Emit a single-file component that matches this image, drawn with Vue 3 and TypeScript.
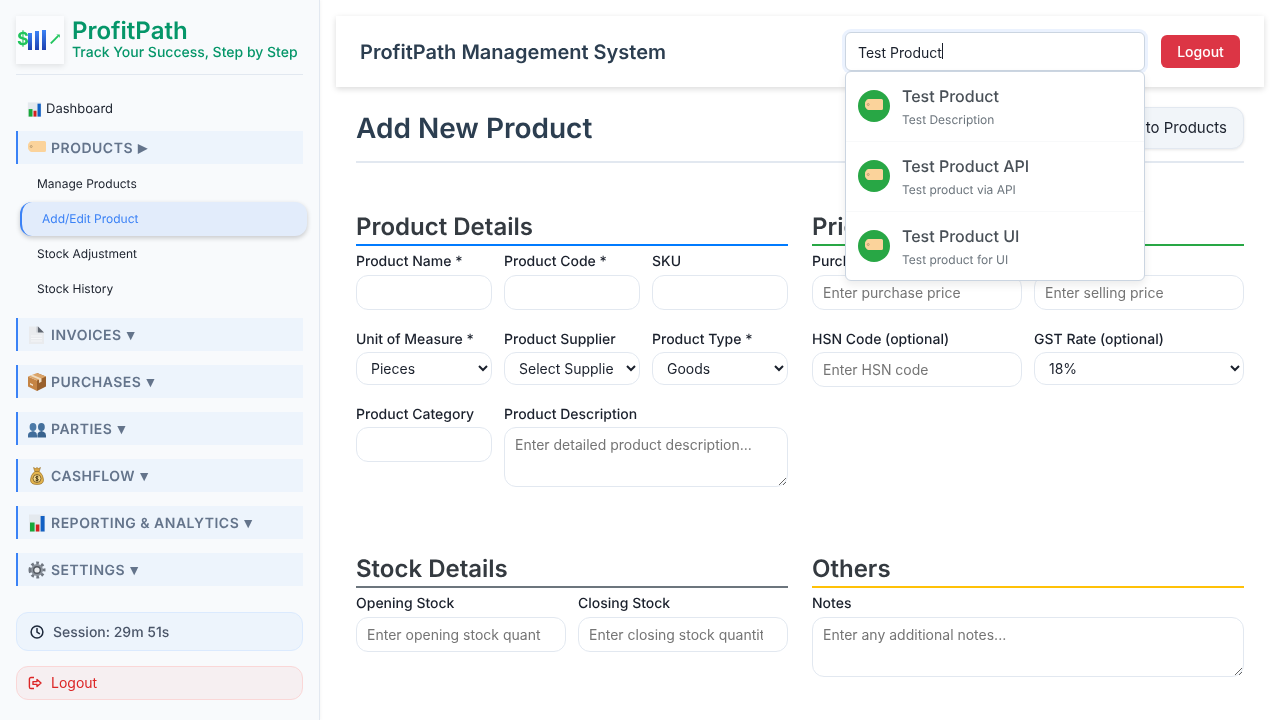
<script setup lang="ts">
import { onMounted, ref } from 'vue'

interface Shape {
  d: string
  fill?: string
  stroke?: string
  sw?: number
  dash?: string
}

const searchEl = ref<HTMLInputElement | null>(null)
const search = 'Test Product'

// small pictograms, all on an 18x18 box
const icons: Record<string, Shape[]> = {
  chart: [
    { d: 'M1 0.5 H17 V18 H1 Z', fill: '#e4e9ee' },
    { d: 'M2 8.5 H6.6 V17.5 H2 Z', fill: '#18a83a' },
    { d: 'M7.8 10.5 H11.4 V17.5 H7.8 Z', fill: '#d3201f' },
    { d: 'M12.6 2 H16.6 V17.5 H12.6 Z', fill: '#1260c4' }
  ],
  tag: [
    {
      d: 'M3.5 2 H16.5 Q18 2 18 3.5 V11.5 Q18 13 16.5 13 H3.5 Q2.6 13 1.8 12.2 L0.5 10.5 Q0 9.8 0 9 V6 Q0 5.2 0.5 4.5 L1.8 2.8 Q2.6 2 3.5 2 Z',
      fill: '#fbd39b'
    },
    { d: 'M2.2 7.5 a1 1 0 1 0 2 0 a1 1 0 1 0 -2 0 Z', fill: '#fbd39b', stroke: '#a88c66', sw: 0.7 }
  ],
  page: [
    { d: 'M1 0.5 H10 L16 6.5 V18 H1 Z', fill: '#e9ebee' },
    { d: 'M10 0.5 L16 6.5 H10 Z', fill: '#5f6670' },
    { d: 'M10 0.5 V6.5 H8.5 V0.5 Z', fill: '#c4c8ce' },
    { d: 'M3 10 H14 M3 12.5 H14 M3 15 H14', stroke: '#f5f6f8', sw: 1 }
  ],
  box: [
    { d: 'M9 0 L18 3.5 V13.5 L9 18 Z', fill: '#99602c' },
    { d: 'M0 3.5 L9 7.5 V18 L0 13.5 Z', fill: '#c58444' },
    { d: 'M0 3.5 L9 0 L18 3.5 L9 7.5 Z', fill: '#dba468' },
    { d: 'M4.5 1.8 L13.5 5.6 V8.8 L11 10 V6.6 L2 2.8 Z', fill: '#f0dcc0' },
    { d: 'M2 10 L5 11.5 V13 L2 11.5 Z', fill: '#f3e6d4' }
  ],
  people: [
    { d: 'M1.6 7 a3.4 4 0 1 0 6.8 0 a3.4 4 0 1 0 -6.8 0 Z', fill: '#4d7ba8' },
    { d: 'M10 7 a3.4 4 0 1 0 6.8 0 a3.4 4 0 1 0 -6.8 0 Z', fill: '#44709c' },
    { d: 'M0 17.5 V15.5 Q0 12.5 3 11.8 L5 11 L7 11.8 Q9 12.5 9 15.5 V17.5 Z', fill: '#406d9b' },
    { d: 'M9.4 17.5 V15.5 Q9.4 12.5 11.4 11.8 L13.4 11 L15.4 11.8 Q18 12.5 18 15.5 V17.5 Z', fill: '#38628d' }
  ],
  money: [
    { d: 'M5.5 0.5 L7.5 1.5 L9 0.5 L10.5 1.5 L12.5 0.5 L11.2 4.5 H6.8 Z', fill: '#d9a441', stroke: '#8a6420', sw: 0.5 },
    {
      d: 'M6.8 4.5 H11.2 Q15.5 8 15.5 13 Q15.5 17.5 9 17.5 Q2.5 17.5 2.5 13 Q2.5 8 6.8 4.5 Z',
      fill: '#e3b44e',
      stroke: '#8a6420',
      sw: 0.6
    },
    { d: 'M5 11.5 a4 4 0 1 0 8 0 a4 4 0 1 0 -8 0 Z', fill: '#f4d98c', stroke: '#5b4216', sw: 0.7 },
    { d: 'M10.4 10 Q9 9 7.9 10 Q7.4 11.2 9 11.6 Q10.7 12 10.2 13.2 Q9 14.1 7.6 13.1 M9 8.6 V14.6', stroke: '#3e2c0c', sw: 0.9, fill: 'none' }
  ],
  gear: [
    { d: 'M2.2 9 a6.8 6.8 0 1 0 13.6 0 a6.8 6.8 0 1 0 -13.6 0 Z', fill: 'none', stroke: '#6f7680', sw: 3.4, dash: '2.6 2.4' },
    { d: 'M3 9 a6 6 0 1 0 12 0 a6 6 0 1 0 -12 0 Z', fill: '#8b929b' },
    { d: 'M5 9 a4 4 0 1 0 8 0 a4 4 0 1 0 -8 0 Z', fill: '#50565e' },
    { d: 'M6.4 9 a2.6 2.6 0 1 0 5.2 0 a2.6 2.6 0 1 0 -5.2 0 Z', fill: '#e9ecef' }
  ]
}

const subItems = [
  { label: 'Manage Products', active: false },
  { label: 'Add/Edit Product', active: true },
  { label: 'Stock Adjustment', active: false },
  { label: 'Stock History', active: false }
]

const groups = [
  { icon: 'page', label: 'INVOICES' },
  { icon: 'box', label: 'PURCHASES' },
  { icon: 'people', label: 'PARTIES' },
  { icon: 'money', label: 'CASHFLOW' },
  { icon: 'chart', label: 'REPORTING & ANALYTICS' },
  { icon: 'gear', label: 'SETTINGS' }
]

const results = [
  { name: 'Test Product', desc: 'Test Description' },
  { name: 'Test Product API', desc: 'Test product via API' },
  { name: 'Test Product UI', desc: 'Test product for UI' }
]

onMounted(() => {
  const el = searchEl.value
  if (el) {
    el.focus()
    el.setSelectionRange(search.length, search.length)
  }
})
</script>

<template>
  <div class="app">
    <!-- Sidebar -->
    <aside class="sidebar">
      <div class="brand">
        <div class="logo">
          <span class="logo-dollar">$</span>
          <span class="logo-bars"><i></i><i></i><i></i></span>
          <svg class="logo-arrow" width="10" height="10" viewBox="0 0 10 10">
            <path d="M0.8 9.4 L8 2.2" stroke="#22c55e" stroke-width="1.9" fill="none" />
            <path d="M6.4 0.4 H9.8 V3.8 Z" fill="#22c55e" />
          </svg>
        </div>
        <div class="brand-text">
          <div class="brand-name">ProfitPath</div>
          <div class="brand-tag">Track Your Success, Step by Step</div>
        </div>
      </div>

      <nav class="nav">
        <a class="nav-link">
          <svg class="dash-icon" width="15" height="15" viewBox="0 0 18 18">
            <path v-for="s in icons.chart" :key="s.d" :d="s.d" :fill="s.fill" />
          </svg>
          Dashboard
        </a>
        <div class="group">
          <svg class="group-icon" width="18" height="18" viewBox="0 0 18 18">
            <path
              v-for="s in icons.tag"
              :key="s.d"
              :d="s.d"
              :fill="s.fill"
              :stroke="s.stroke"
              :stroke-width="s.sw"
            />
          </svg>
          <span>PRODUCTS</span>
          <span class="caret caret-right">▶</span>
        </div>
        <div class="sub-list">
          <a
            v-for="item in subItems"
            :key="item.label"
            class="sub-link"
            :class="{ active: item.active }"
          >{{ item.label }}</a>
        </div>
        <div v-for="g in groups" :key="g.label" class="group group-closed">
          <svg class="group-icon" width="18" height="18" viewBox="0 0 18 18">
            <path
              v-for="s in icons[g.icon]"
              :key="s.d"
              :d="s.d"
              :fill="s.fill"
              :stroke="s.stroke"
              :stroke-width="s.sw"
              :stroke-dasharray="s.dash"
            />
          </svg>
          <span>{{ g.label }}</span>
          <span class="caret">▼</span>
        </div>
      </nav>

      <div class="session">
        <svg width="14" height="14" viewBox="0 0 14 14" fill="none" stroke="#1e293b" stroke-width="1.5">
          <circle cx="7" cy="7" r="5.9" />
          <path d="M7 3.4 V7 L9.4 8.6" stroke-linecap="round" />
        </svg>
        <span>Session: 29m 51s</span>
      </div>
      <button class="side-logout">
        <svg width="14" height="14" viewBox="0 0 14 14" fill="none" stroke="#dc2626" stroke-width="1.4">
          <path d="M6 1.5 H3 a1.6 1.6 0 0 0 -1.6 1.6 V10.9 a1.6 1.6 0 0 0 1.6 1.6 H6" />
          <path d="M5 5.6 H9 V3.4 L13 7 L9 10.6 V8.4 H5 Z" stroke-linejoin="round" />
        </svg>
        <span>Logout</span>
      </button>
    </aside>

    <!-- Main -->
    <main class="main">
      <header class="topbar">
        <div class="top-title">ProfitPath Management System</div>
        <div class="search-wrap">
          <input ref="searchEl" class="search" type="text" :value="search" />
          <span class="text-caret"></span>
          <div class="dropdown">
            <div v-for="r in results" :key="r.name" class="result">
              <div class="result-icon">
                <svg width="18" height="18" viewBox="0 0 18 18">
                  <path
                    v-for="s in icons.tag"
                    :key="s.d"
                    :d="s.d"
                    :fill="s.fill"
                    :stroke="s.stroke"
                    :stroke-width="s.sw"
                  />
                </svg>
              </div>
              <div class="result-text">
                <div class="result-name">{{ r.name }}</div>
                <div class="result-desc">{{ r.desc }}</div>
              </div>
            </div>
          </div>
        </div>
        <button class="top-logout">Logout</button>
      </header>

      <section class="page">
        <div class="page-head">
          <h1>Add New Product</h1>
          <button class="back-btn">Back to Products</button>
        </div>

        <div class="sections">
          <div class="block">
            <h2 class="blue">Product Details</h2>
            <div class="grid3">
              <div class="field">
                <label>Product Name *</label>
                <input type="text" />
              </div>
              <div class="field">
                <label>Product Code *</label>
                <input type="text" />
              </div>
              <div class="field">
                <label>SKU</label>
                <input type="text" />
              </div>
              <div class="field">
                <label>Unit of Measure *</label>
                <select><option>Pieces</option></select>
              </div>
              <div class="field">
                <label>Product Supplier</label>
                <select><option>Select Supplier</option></select>
              </div>
              <div class="field">
                <label>Product Type *</label>
                <select><option>Goods</option></select>
              </div>
              <div class="field">
                <label>Product Category</label>
                <input type="text" />
              </div>
              <div class="field span2">
                <label>Product Description</label>
                <textarea placeholder="Enter detailed product description..."></textarea>
              </div>
            </div>
          </div>

          <div class="block">
            <h2 class="green">Pricing Details</h2>
            <div class="grid2">
              <div class="field">
                <label>Purchase Price *</label>
                <input type="text" placeholder="Enter purchase price" />
              </div>
              <div class="field">
                <label>Selling Price *</label>
                <input type="text" placeholder="Enter selling price" />
              </div>
              <div class="field">
                <label>HSN Code (optional)</label>
                <input type="text" placeholder="Enter HSN code" />
              </div>
              <div class="field">
                <label>GST Rate (optional)</label>
                <select><option>18%</option></select>
              </div>
            </div>
          </div>

          <div class="block">
            <h2 class="grey">Stock Details</h2>
            <div class="grid2">
              <div class="field">
                <label>Opening Stock</label>
                <input type="text" placeholder="Enter opening stock quantity" />
              </div>
              <div class="field">
                <label>Closing Stock</label>
                <input type="text" placeholder="Enter closing stock quantity" />
              </div>
            </div>
          </div>

          <div class="block">
            <h2 class="yellow">Others</h2>
            <div class="field">
              <label>Notes</label>
              <textarea placeholder="Enter any additional notes..."></textarea>
            </div>
          </div>
        </div>
      </section>
    </main>
  </div>
</template>

<style>
html,
body {
  margin: 0;
  overflow: hidden;
  background: #fff;
}
</style>

<style scoped>
.app {
  display: flex;
  height: 720px;
  overflow: hidden;
  font-family: Inter, "Noto Sans", sans-serif;
  color: #1a202c;
  text-rendering: geometricPrecision;
  will-change: transform;
}

/* Sidebar */
.sidebar {
  width: 320px;
  flex: none;
  box-sizing: border-box;
  padding: 16px 16px 20px;
  background: #f8fafc;
  border-right: 1px solid #e2e8f0;
  box-shadow: 1px 0 3px rgba(0, 0, 0, 0.04);
  display: flex;
  flex-direction: column;
}

.brand {
  display: flex;
  gap: 8px;
  height: 59px;
  border-bottom: 1px solid #e2e8f0;
  box-sizing: border-box;
}

.logo {
  width: 48px;
  height: 48px;
  box-sizing: border-box;
  padding-left: 1px;
  background: #fbfcfe;
  box-shadow: 0 2px 6px rgba(0, 0, 0, 0.1);
  display: flex;
  align-items: center;
}

.logo-dollar {
  width: 11px;
  font-size: 18px;
  font-weight: 700;
  color: #22c55e;
  line-height: 1;
}

.logo-bars {
  display: flex;
  align-items: flex-end;
  gap: 3px;
  height: 20px;
}

.logo-bars i {
  display: block;
  width: 4px;
  height: 100%;
  background: linear-gradient(#3b82f6, #1e40af);
}

.logo-bars i:nth-child(1) {
  height: 17px;
}

.logo-bars i:nth-child(2) {
  height: 19px;
}

.logo-arrow {
  margin: -3px 0 0 4px;
}

.brand-name {
  font-size: 24px;
  font-weight: 600;
  line-height: 29px;
  color: #059669;
}

.brand-tag {
  font-size: 14px;
  font-weight: 500;
  line-height: 17px;
  margin-top: -1px;
  color: #059669;
}

.nav {
  display: flex;
  flex-direction: column;
  flex: 1;
  margin-top: 24px;
}

.nav-link {
  display: flex;
  align-items: center;
  gap: 4px;
  font-size: 13px;
  line-height: 20px;
  padding-left: 11px;
  margin-bottom: 12px;
}

.group {
  height: 33px;
  box-sizing: border-box;
  display: flex;
  align-items: center;
  border-left: 2px solid #3b82f6;
  background: #edf4fc;
  padding: 1px 0 0 10px;
  font-size: 14px;
  font-weight: 600;
  letter-spacing: 0.5px;
  color: #64748b;
  white-space: nowrap;
}

.group-closed {
  margin-bottom: 14px;
}

.group-icon {
  flex: none;
  margin-right: 5px;
}

.caret {
  margin-left: 2px;
  font-family: "Liberation Sans", sans-serif;
  font-size: 14px;
  letter-spacing: 0;
}

.caret-right {
  margin-left: 5px;
  font-size: 12px;
}

.sub-list {
  display: flex;
  flex-direction: column;
  margin: 2px 0 12px;
}

.sub-link {
  height: 35px;
  line-height: 35px;
  font-size: 12px;
  padding-left: 21px;
  color: #1a202c;
}

.sub-link.active {
  height: 34px;
  line-height: 34px;
  margin: 1px -4px 0 4px;
  padding-left: 20px;
  color: #3b82f6;
  background: #e2ecfb;
  border-left: 2px solid #3b82f6;
  border-radius: 12px;
  box-shadow: 0 2px 5px rgba(0, 0, 0, 0.2);
}

.session {
  height: 39px;
  box-sizing: border-box;
  display: flex;
  align-items: center;
  gap: 9px;
  padding: 1px 0 0 13px;
  border: 1px solid #dbeafe;
  border-radius: 12px;
  background: #edf4fc;
  font-size: 14px;
  font-weight: 500;
  color: #4a5568;
}

.side-logout {
  height: 34px;
  margin-top: 15px;
  display: flex;
  align-items: center;
  gap: 9px;
  padding: 0 0 1px 11px;
  border: 1px solid #fad7d7;
  border-radius: 12px;
  background: #f6eff1;
  font-family: inherit;
  font-size: 14px;
  color: #dc2626;
}

/* Main */
.main {
  flex: 1;
  min-width: 0;
  padding: 16px 16px 0;
  position: relative;
}

.topbar {
  height: 71px;
  display: flex;
  align-items: center;
  padding: 0 24px;
  background: #fff;
  box-shadow: 0 2px 6px rgba(0, 0, 0, 0.15);
}

.top-title {
  flex: 1;
  font-size: 20px;
  font-weight: 600;
  color: #2c3e50;
}

.search-wrap {
  position: relative;
  width: 300px;
  margin-right: 16px;
}

.search {
  display: block;
  width: 100%;
  height: 39px;
  box-sizing: border-box;
  padding: 1px 12px 0;
  border: 1px solid #cbd5e1;
  border-radius: 6px;
  outline: none;
  box-shadow: 0 0 0 3px rgba(59, 130, 246, 0.1);
  font-family: inherit;
  font-size: 14px;
  color: #1a202c;
  caret-color: transparent;
}

.text-caret {
  position: absolute;
  left: 97px;
  top: 11px;
  width: 1px;
  height: 16px;
  background: #1a202c;
}

.dropdown {
  position: absolute;
  top: 39px;
  left: 0;
  right: 0;
  z-index: 10;
  background: #fff;
  border: 1px solid #cbd5e1;
  border-radius: 6px;
  box-shadow: 0 4px 8px rgba(0, 0, 0, 0.08);
}

.result {
  height: 70px;
  box-sizing: border-box;
  display: flex;
  align-items: flex-start;
  gap: 12px;
  padding: 0 12px;
  border-bottom: 1px solid #f8f9fa;
}

.result:last-child {
  height: 68px;
  border-bottom: none;
}

.result-icon {
  width: 32px;
  height: 32px;
  margin-top: 18px;
  border-radius: 50%;
  background: #28a745;
  display: flex;
  align-items: center;
  justify-content: center;
}

.result-icon svg {
  margin-top: -1px;
}

.result-text {
  margin-top: 15px;
}

.result-name {
  font-size: 16px;
  font-weight: 500;
  line-height: 19px;
  color: #495057;
  margin-bottom: 6px;
}

.result-desc {
  font-size: 12px;
  line-height: 15px;
  color: #6c757d;
}

.top-logout {
  width: 79px;
  height: 33px;
  border: none;
  border-radius: 6px;
  background: #dc3545;
  color: #fff;
  font-family: inherit;
  font-size: 14px;
  font-weight: 500;
}

.page {
  padding: 20px 20px 0;
}

.page-head {
  height: 42px;
  display: flex;
  align-items: center;
  justify-content: space-between;
  border-bottom: 2px solid #e2e8f0;
  padding-bottom: 12px;
}

h1 {
  margin: 0;
  font-size: 28px;
  font-weight: 600;
  color: #2c3e50;
}

.back-btn {
  height: 42px;
  padding: 0 16px 1px;
  border: 1px solid #e2e8f0;
  border-radius: 12px;
  background: #f1f5f9;
  box-shadow: 0 1px 3px rgba(0, 0, 0, 0.1);
  font-family: inherit;
  font-size: 15px;
  color: #1a202c;
}

.sections {
  display: grid;
  grid-template-columns: 1fr 1fr;
  grid-template-rows: 342px auto;
  column-gap: 24px;
  margin-top: 49px;
}

h2 {
  margin: 0 0 7.4px;
  padding-bottom: 3px;
  font-size: 24px;
  font-weight: 600;
  line-height: 29px;
  color: #343a40;
  border-bottom: 2px solid;
}

h2.blue { border-color: #007bff; }
h2.green { border-color: #28a745; }
h2.grey { border-color: #6c757d; }
h2.yellow { border-color: #ffc107; }

.grid3 {
  display: grid;
  grid-template-columns: repeat(3, 1fr);
  gap: 21px 12px;
  align-items: start;
}

.grid2 {
  display: grid;
  grid-template-columns: repeat(2, 1fr);
  gap: 21px 12px;
  align-items: start;
}

.span2 {
  grid-column: span 2;
}

.field {
  min-width: 0;
}

label {
  display: block;
  margin-bottom: 4.2px;
  font-size: 14px;
  font-weight: 500;
  line-height: 17px;
  color: #1a202c;
}

input:not(.search),
select,
textarea {
  display: block;
  width: 100%;
  box-sizing: border-box;
  border: 1px solid #e2e8f0;
  border-radius: 12px;
  background: #fff;
  font-family: inherit;
  font-size: 14px;
  color: #1a202c;
  padding: 8px 10px;
}

select {
  height: 32.8px;
  padding: 1px 10px 0;
}

input:not(.search) {
  height: 35px;
  padding-right: 24px;
}

textarea {
  height: 60px;
}
</style>
